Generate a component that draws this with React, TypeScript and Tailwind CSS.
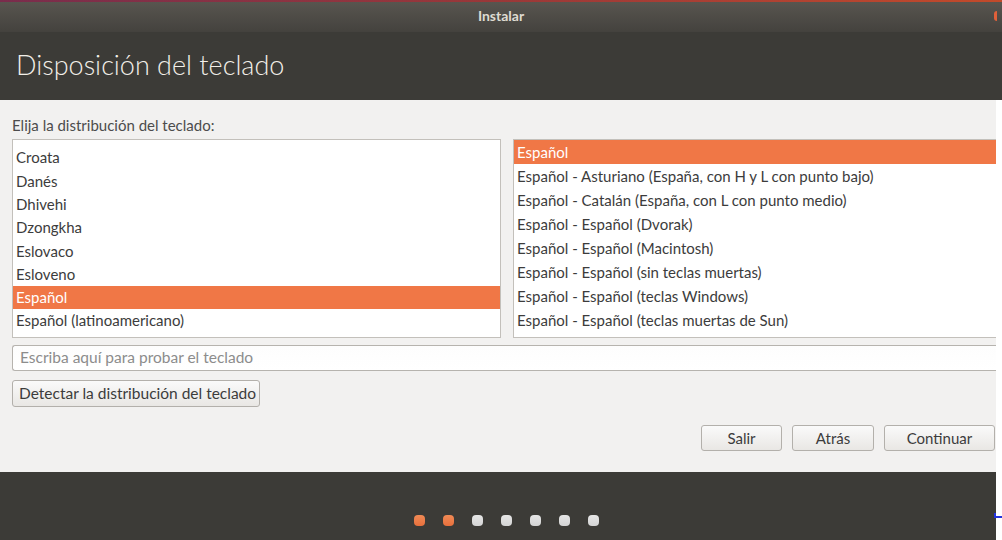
import React from 'react';

const leftItems = [
  'Croata',
  'Danés',
  'Dhivehi',
  'Dzongkha',
  'Eslovaco',
  'Esloveno',
  'Español',
  'Español (latinoamericano)',
];

const rightItems = [
  'Español',
  'Español - Asturiano (España, con H y L con punto bajo)',
  'Español - Catalán (España, con L con punto medio)',
  'Español - Español (Dvorak)',
  'Español - Español (Macintosh)',
  'Español - Español (sin teclas muertas)',
  'Español - Español (teclas Windows)',
  'Español - Español (teclas muertas de Sun)',
];

const Button = ({ label, width }: { label: string; width: string }) => (
  <button
    type="button"
    className={`${width} h-[26px] rounded-[3px] border border-[#b3b0ab] bg-gradient-to-b from-[#fafafa] to-[#e9e7e4] text-[15px] text-[#3c3c3c] flex items-center justify-center`}
  >
    {label}
  </button>
);

export default function App() {
  return (
    <div className="w-[1002px] h-[540px] overflow-hidden bg-white flex flex-col font-['Lato',sans-serif]">
      {/* desktop strip */}
      <div className="h-[2px] bg-gradient-to-r from-[#7a2c4c] via-[#9a3838] to-[#c24a2a]" />

      {/* title bar */}
      <div className="relative h-[30px] bg-gradient-to-b from-[#58554f] to-[#44423e] flex items-center justify-center pb-[3px]">
        <span className="text-[14px] font-bold text-[#dfdbd2]">Instalar</span>
        <div className="absolute left-[994px] top-[9px] w-[3px] h-[10px] rounded-l-full bg-[#e0603a]" />
      </div>

      {/* header */}
      <div className="h-[68px] bg-[#3c3b37] pl-4 pt-[17px]">
        <h1 className="text-[27px] font-light leading-8 text-[#f2efe9]">Disposición del teclado</h1>
      </div>

      {/* content */}
      <div className="flex h-[372px]">
        <div className="w-[996px] bg-[#f2f1f0] pl-3 pt-[15px] flex flex-col">
          <div className="text-[15px] leading-5 text-[#4c4c4c] h-[24px]">Elija la distribución del teclado:</div>

          <div className="flex gap-3 h-[199px]">
            <div className="w-[489px] border border-[#c3c0bb] bg-white pt-[6px] overflow-hidden">
              {leftItems.map((item, i) => (
                <div
                  key={item}
                  className={`h-[23.3px] pl-[3px] flex items-center text-[15px] ${
                    i === 6 ? 'bg-[#f07746] text-white' : 'text-[#3c3c3c]'
                  }`}
                >
                  {item}
                </div>
              ))}
            </div>
            <div className="flex-1 border-y border-l border-[#c3c0bb] bg-white overflow-hidden">
              {rightItems.map((item, i) => (
                <div
                  key={item}
                  className={`h-6 pl-[3px] flex items-center text-[15px] whitespace-nowrap ${
                    i === 0 ? 'bg-[#f07746] text-white' : 'text-[#3c3c3c]'
                  }`}
                >
                  {item}
                </div>
              ))}
            </div>
          </div>

          <div className="mt-[7px] h-[26px] rounded-l-[3px] border-y border-l border-[#b6b3ae] bg-gradient-to-b from-[#fdfdfd] to-white pl-[7px] flex items-center text-[15.5px] text-[#8c8c8c]">
            Escriba aquí para probar el teclado
          </div>

          <div className="mt-[9px]">
            <button
              type="button"
              className="w-[248px] h-[27px] rounded-[3px] border border-[#b3b0ab] bg-gradient-to-b from-[#fafafa] to-[#e9e7e4] pl-[6px] text-left text-[15.5px] text-[#3c3c3c]"
            >
              Detectar la distribución del teclado
            </button>
          </div>

          <div className="mt-[18px] flex justify-end gap-[10px] pr-[1px]">
            <Button label="Salir" width="w-[81px]" />
            <Button label="Atrás" width="w-[82px]" />
            <Button label="Continuar" width="w-[111px]" />
          </div>
        </div>
        <div className="flex-1 bg-white" />
      </div>

      {/* footer */}
      <div className="relative flex h-[68px]">
        <div className="w-[996px] bg-[#3c3b37] pt-[43px] pl-[17px] flex justify-center gap-[18px]">
          {[0, 1, 2, 3, 4, 5, 6].map((d) => (
            <div
              key={d}
              className={`w-[11px] h-[11px] rounded-[4px] ${
                d < 2
                  ? 'bg-gradient-to-b from-[#f08a55] to-[#e8703c]'
                  : 'bg-gradient-to-b from-[#e6e6e6] to-[#d4d4d4]'
              }`}
            />
          ))}
        </div>
        <div className="flex-1 bg-white" />
        <div className="absolute left-[994px] top-[41px] w-[2px] h-[5px] bg-[#2233dd]" />
        <div className="absolute left-[994px] top-[44px] w-[8px] h-[2px] bg-[#2233dd]" />
      </div>
    </div>
  );
}
